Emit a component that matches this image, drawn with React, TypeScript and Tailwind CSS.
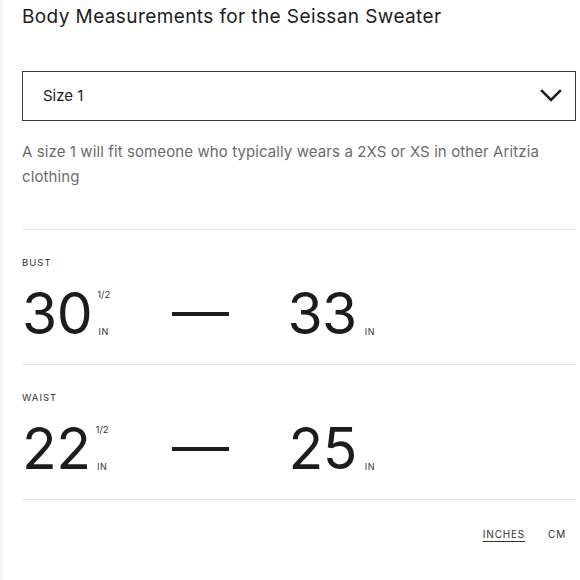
import { ReactNode } from "react";

function Chevron() {
  return (
    <svg width="22" height="14" viewBox="0 0 22 14" fill="none">
      <path d="M2 2 L11 11 L20 2" stroke="#1a1a1a" strokeWidth="2.5" strokeLinecap="square" />
    </svg>
  );
}

function Value({ num, frac }: { num: string; frac?: string }) {
  return (
    <div className="flex items-stretch">
      <span className="text-[57px] leading-[62px] text-[#1c1c1c] tracking-[-0.5px]">{num}</span>
      <div className="ml-[5px] flex flex-col items-center justify-between pt-[7px] pb-[9px]">
        <span className="text-[9.5px] leading-[10px] text-[#333]">{frac ?? ""}</span>
        <span className="text-[9px] leading-[9px] tracking-[0.5px] text-[#333]">IN</span>
      </div>
    </div>
  );
}

function Row({ label, from, frac, to }: { label: string; from: string; frac?: string; to: string }) {
  return (
    <div className="border-t border-[#e6e6e6] pt-[27px] pb-[19px]">
      <div className="text-[9.5px] leading-[12px] tracking-[1px] text-[#333]">{label}</div>
      <div className="mt-[14px] flex items-center">
        <div className="w-[150px]">
          <Value num={from} frac={frac} />
        </div>
        <div className="h-[4px] w-[57px] bg-[#1c1c1c]" />
        <div className="flex w-[146px] justify-end">
          <div className="flex items-stretch">
            <span className="text-[57px] leading-[62px] text-[#1c1c1c] tracking-[-0.5px]">{to}</span>
            <div className="ml-[8px] flex flex-col justify-end pb-[9px]">
              <span className="text-[9px] leading-[9px] tracking-[0.5px] text-[#333]">IN</span>
            </div>
          </div>
        </div>
      </div>
    </div>
  );
}

function Unit({ children, active }: { children: ReactNode; active?: boolean }) {
  return (
    <span
      className={
        active
          ? "text-[10px] tracking-[0.8px] text-[#333] underline underline-offset-[3px]"
          : "text-[10px] tracking-[0.8px] text-[#333]"
      }
    >
      {children}
    </span>
  );
}

export default function App() {
  return (
    <div className="flex min-h-[580px] w-[580px] bg-white font-['Inter',sans-serif]">
      <div className="w-[3px] shrink-0 bg-[#f4f4f4]" />
      <div className="flex-1 pl-[19px] pr-[4px] pt-[5px]">
        <h1 className="text-[19px] leading-[24px] tracking-[0.4px] text-[#1c1c1c]">
          Body Measurements for the Seissan Sweater
        </h1>

        <div className="mt-[42px] flex h-[50px] items-center justify-between border border-[#3a3a3a] pl-[20px] pr-[13px]">
          <span className="text-[15px] text-[#1c1c1c]">Size 1</span>
          <Chevron />
        </div>

        <p className="mt-[18px] pr-[20px] text-[15px] leading-[25px] tracking-[0.1px] text-[#6b6b6b]">
          A size 1 will fit someone who typically wears a 2XS or XS in other Aritzia clothing
        </p>

        <div className="mt-[40px]">
          <Row label="BUST" from="30" frac="1/2" to="33" />
          <Row label="WAIST" from="22" frac="1/2" to="25" />
          <div className="flex justify-end gap-[23px] border-t border-[#e6e6e6] pr-[10px] pt-[27px]">
            <Unit active>INCHES</Unit>
            <Unit>CM</Unit>
          </div>
        </div>
      </div>
    </div>
  );
}
